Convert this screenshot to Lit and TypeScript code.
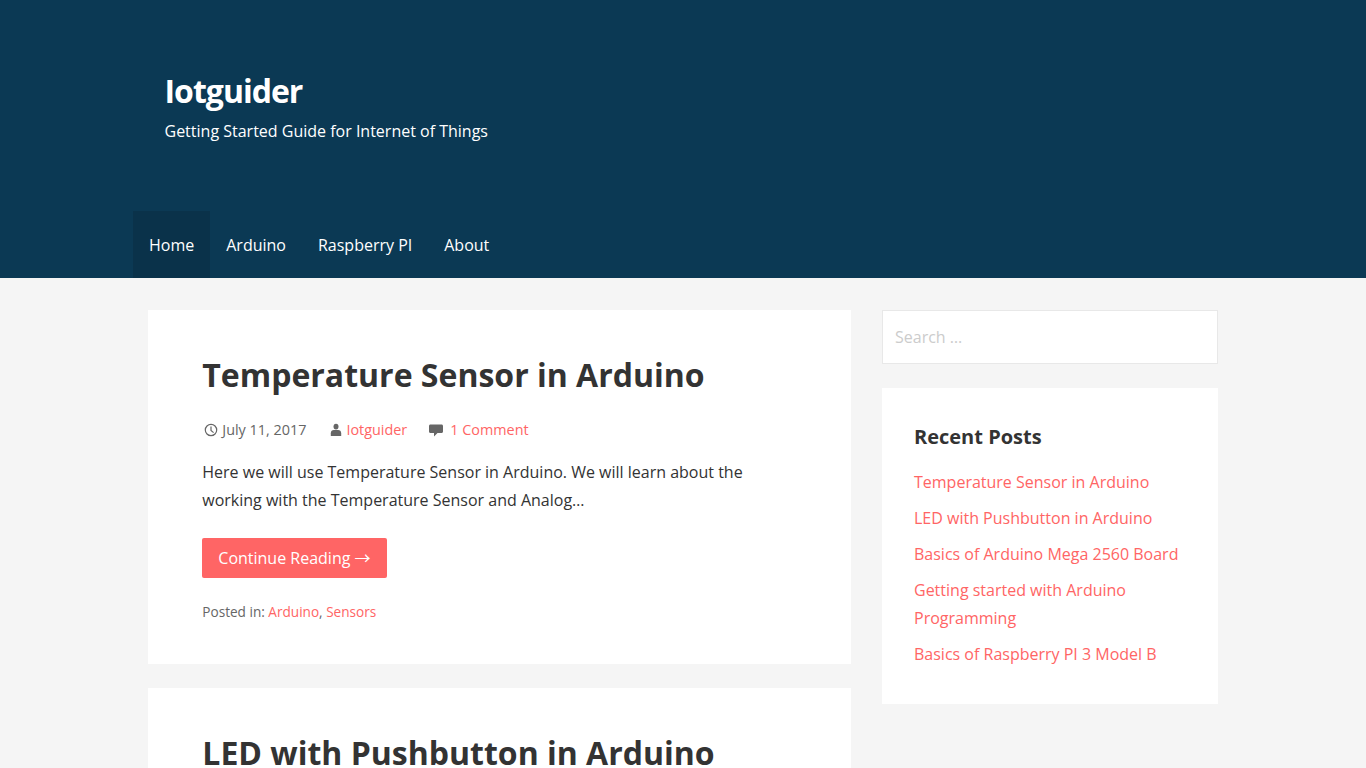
import { LitElement, html, css, svg } from 'lit'
import { customElement } from 'lit/decorators.js'

const recent = [
	'Temperature Sensor in Arduino',
	'LED with Pushbutton in Arduino',
	'Basics of Arduino Mega 2560 Board',
	'Getting started with Arduino Programming',
	'Basics of Raspberry PI 3 Model B',
]

const clock = svg`<circle cx="7" cy="7" r="5.7" fill="none" stroke="currentColor" stroke-width="1.2"/><path d="M7 3.400V7.500L9.600 9.600" fill="none" stroke="currentColor" stroke-width="1.2"/>`
const user = svg`<ellipse cx="6" cy="3.600" rx="2.500" ry="2.900" fill="currentColor"/><path d="M.8 13V10.200C.8 8.200 2.200 7 3.800 7H8.200C9.800 7 11.200 8.200 11.200 10.200V13Z" fill="currentColor"/>`
const bubble = svg`<path d="M2.500 1.500H13.500C14.400 1.500 15 2.100 15 3V8.500C15 9.400 14.400 10 13.500 10H9.500L6 13.500V10H2.500C1.600 10 1 9.400 1 8.500V3C1 2.100 1.600 1.500 2.500 1.500Z" fill="currentColor"/>`

@customElement('app-root')
export class AppRoot extends LitElement {
	static styles = css`
		:host {
			display: block;
			height: 768px;
			overflow: hidden;
			background: #f5f5f5;
			font-family: 'Open Sans', sans-serif;
			font-size: 16px;
			line-height: 28px;
			color: #333;
		}
		a {
			color: #ff6565;
			text-decoration: none;
		}
		.header {
			background: #0b3954;
			height: 278px;
			display: flex;
			flex-direction: column;
		}
		.branding {
			height: 211px;
			box-sizing: border-box;
			padding: 69px 0 0 164.500px;
		}
		.site-title {
			font-size: 32px;
			line-height: 44px;
			font-weight: 700;
			letter-spacing: -1px;
			color: #fff;
		}
		.tagline {
			color: #fff;
			line-height: 30px;
			margin-top: 3px;
		}
		.nav {
			display: flex;
			padding-left: 133px;
		}
		.nav a {
			color: #fff;
			padding: 20px 16px 19px;
			line-height: 28px;
		}
		.nav a.active {
			background: #0a324a;
		}
		.wrap {
			display: flex;
			gap: 31px;
			padding: 32px 148px 0;
			align-items: flex-start;
		}
		.main {
			width: 703px;
			flex: none;
			display: flex;
			flex-direction: column;
			gap: 24px;
		}
		.card {
			background: #fff;
			padding: 43px 54px 40px 54.300px;
		}
		h2 {
			margin: 0;
			font-size: 32px;
			line-height: 44px;
			font-weight: 700;
			color: #333;
		}
		.meta {
			display: flex;
			align-items: center;
			margin-top: 21px;
			font-size: 14.4px;
			line-height: 24px;
			color: #666;
		}
		.meta span {
			display: inline-flex;
			align-items: center;
		}
		.meta svg {
			height: 14px;
			flex: none;
		}
		.date svg {
			width: 14px;
			margin: 0 4px 0 2px;
		}
		.author svg {
			width: 12px;
			margin: 0 4px 0 24px;
		}
		.comments svg {
			width: 16px;
			margin: 0 6px 0 21px;
		}
		.excerpt {
			margin: 16px 0 0;
		}
		.btn {
			display: inline-block;
			margin-top: 24px;
			background: #ff6565;
			color: #fff;
			padding: 6px 16px;
			border-radius: 2px;
		}
		.arrow {
			font-family: 'Noto Sans CJK JP', sans-serif;
			line-height: 1;
		}
		.cats {
			margin-top: 22px;
			font-size: 13.6px;
			line-height: 24px;
			color: #666;
		}
		.side {
			width: 336px;
			flex: none;
			display: flex;
			flex-direction: column;
			gap: 24px;
		}
		.search {
			box-sizing: border-box;
			height: 54px;
			background: #fff;
			border: 1px solid #e8e8e8;
			padding: 0 12px;
			line-height: 52px;
			color: #ccc;
		}
		.widget {
			background: #fff;
			padding: 32px 32px 36px;
		}
		.widget h3 {
			margin: 0 0 14px;
			font-size: 20px;
			line-height: 34px;
			font-weight: 700;
		}
		.widget ul {
			list-style: none;
			margin: 0;
			padding: 0;
			display: flex;
			flex-direction: column;
			gap: 8px;
		}
	`

	render() {
		return html`
			<header class="header">
				<div class="branding">
					<div class="site-title">Iotguider</div>
					<div class="tagline">Getting Started Guide for Internet of Things</div>
				</div>
				<nav class="nav">
					<a class="active" href="#">Home</a>
					<a href="#">Arduino</a>
					<a href="#">Raspberry PI</a>
					<a href="#">About</a>
				</nav>
			</header>
			<div class="wrap">
				<main class="main">
					<article class="card">
						<h2>Temperature Sensor in Arduino</h2>
						<div class="meta">
							<span class="date"><svg viewBox="0 0 14 14">${clock}</svg>July 11, 2017</span>
							<span class="author"><svg viewBox="0 0 12 14">${user}</svg><a href="#">Iotguider</a></span>
							<span class="comments"><svg viewBox="0 0 16 14">${bubble}</svg><a href="#">1 Comment</a></span>
						</div>
						<p class="excerpt">
							Here we will use Temperature Sensor in Arduino. We will learn about the working with the
							Temperature Sensor and Analog…
						</p>
						<a class="btn" href="#">Continue Reading <span class="arrow">→</span></a>
						<div class="cats">Posted in: <a href="#">Arduino</a>, <a href="#">Sensors</a></div>
					</article>
					<article class="card">
						<h2>LED with Pushbutton in Arduino</h2>
					</article>
				</main>
				<aside class="side">
					<div class="search">Search …</div>
					<div class="widget">
						<h3>Recent Posts</h3>
						<ul>
							${recent.map((r) => html`<li><a href="#">${r}</a></li>`)}
						</ul>
					</div>
				</aside>
			</div>
		`
	}
}
